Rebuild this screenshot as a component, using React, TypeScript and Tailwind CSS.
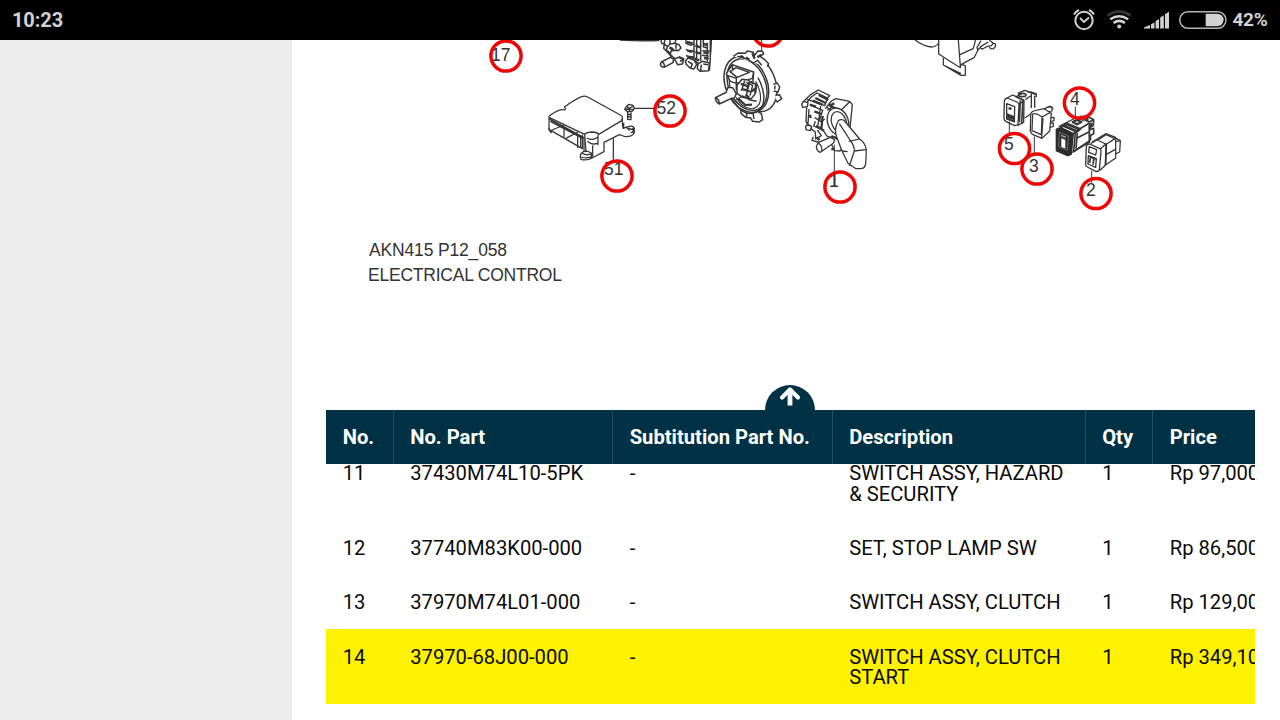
import { clsx } from "clsx";

type Part = {
  no: number;
  part: string;
  sub: string;
  description: string;
  qty: number;
  price: string;
  selected?: boolean;
};

const parts: Part[] = [
  { no: 11, part: "37430M74L10-5PK", sub: "-", description: "SWITCH ASSY, HAZARD & SECURITY", qty: 1, price: "Rp 97,000" },
  { no: 12, part: "37740M83K00-000", sub: "-", description: "SET, STOP LAMP SW", qty: 1, price: "Rp 86,500" },
  { no: 13, part: "37970M74L01-000", sub: "-", description: "SWITCH ASSY, CLUTCH", qty: 1, price: "Rp 129,000" },
  { no: 14, part: "37970-68J00-000", sub: "-", description: "SWITCH ASSY, CLUTCH START", qty: 1, price: "Rp 349,100", selected: true },
];

const columns = ["No.", "No. Part", "Subtitution Part No.", "Description", "Qty", "Price"];

const gridCols = "grid grid-cols-[67.5px_219.5px_219.5px_253px_67.5px_160px] w-[987px]";

// callouts of the exploded view: label position and ring centre
const callouts = [
  { label: "17", x: 491, y: 61, cx: 506, cy: 56 },
  { label: "52", x: 656.5, y: 114, cx: 670, cy: 111 },
  { label: "51", x: 604, y: 175, cx: 617, cy: 176 },
  { label: "1", x: 829, y: 187, cx: 840, cy: 187 },
  { label: "5", x: 1004, y: 150, cx: 1014.5, cy: 148.5 },
  { label: "3", x: 1029, y: 172, cx: 1037, cy: 169 },
  { label: "4", x: 1070, y: 105, cx: 1079.5, cy: 103 },
  { label: "2", x: 1086, y: 196, cx: 1096, cy: 193.5 },
  { label: "", x: 0, y: 0, cx: 768, cy: 31 },
];

function StatusBar() {
  return (
    <header className="flex h-10 shrink-0 items-center bg-black pl-3 pr-3 text-[20px] font-bold text-[#d2d2d2]">
      <span className="w-[60px] tracking-[-0.1px]">10:23</span>
      <svg className="ml-auto" width="160" height="40" viewBox="1070 0 160 40" fill="none" stroke="#d2d2d2">
        {/* alarm */}
        <circle cx="1084" cy="20.5" r="8.7" strokeWidth="2" />
        <path d="M1080 18l4 4 5-4.5" strokeWidth="1.8" />
        <path d="M1074 14.5q1.5-3 5-4.5M1094 14.5q-1.5-3-5-4.5" strokeWidth="2" />
        {/* wifi */}
        <path d="M1107.5 15.5q11.5-8 23 0" stroke="#343434" strokeWidth="2.8" />
        <path d="M1110.2 19.2q9-6 18 0M1113.5 23q5.7-4.3 11.4 0" strokeWidth="2.5" />
        <circle cx="1119.2" cy="26.4" r="2" fill="#d2d2d2" stroke="none" />
        {/* signal */}
        <path
          d="M1144 28.5v-1l6-2.4v3.4zM1151 28.5v-4.2l3.4-1.8v6zM1155.6 28.5v-7.5l3.4-2v9.5zM1160.2 28.5v-11l3.6-2.2v13.2zM1165 28.5v-14.3l4-2.5v16.8z"
          fill="#d2d2d2"
          stroke="none"
        />
        {/* battery */}
        <rect x="1179.7" y="11.7" width="46.3" height="16.6" rx="8.3" strokeWidth="1.5" stroke="#b5b5b5" />
        <path d="M1205.7 13.8h11.7a6.2 6.2 0 0 1 0 12.4h-11.7z" fill="#d2d2d2" stroke="none" />
      </svg>
      <span className="ml-[2.5px] w-[35.5px] text-[19px] tracking-[-0.3px]">42%</span>
    </header>
  );
}

function AirbagController() {
  return (
    <g transform="translate(480 38) scale(.33333)">
      <path d="M206 236q8-8 28-18 12-5 20-2 5-5-1-9 34-24 52-31 8-4 18 1l98 54q10 5 4 17L356 289q-2-6-22-7-16 2-20 7L207 238v36l100 58v-42" />
      <path d="M207 242l105 57v40M211 250l98 52M205 271l8 13 3-8 36-15M252 270v28M256 302l38-20M302 296v32M293 290v40M212 246l90 48" />
      <path d="M314 290l4 52M320 300q18 10 34-3v17q-14 10-32-4M325 312q14 10 23 4M354 290v32M338 322v32" />
      <path d="M426 243l3 28 19-6q13-2 15 7v12q-5 10-18 11-10 2-15-1l-12-4-46 23v28l-30 16q-21 13-39 7-4-6 0-18 6-7 18-7l13 6v15M306 346q13 8 32 1M304 357q18 7 36-4M431 254v18M437 266l12 12M446 270q8 7 13 1v14M452 285l8-5" />
      <path d="M400 301v64M462 211h60" />
      <path d="M440 204l7-5 12 3 4 10-7 8-14 1-8-7 6-10zM441 203l4 8 13-5M434 213l28 2M443 221v23l10 1v-24M443 228l10 3M443 235l10 3M448 211v8" strokeWidth="4" />
    </g>
  );
}

function ComboSwitchLeft() {
  return (
    <g transform="translate(650 40) scale(.33333)" strokeWidth="4.5">
      <path d="M-90 0q70 4 118 1" strokeWidth="5" />
      <path d="M33 0l2 10 8 3-2 12 16 16 8 10M45 0l-3 10 10 10-3 10 12 10M60 0v12l-8 8M60 12l14-2 4-10M74 10l13 4 6 10-8 8-20-3-4 12M78 14v12M66 32l22-2M60 42l14 14 13-4 14 8-4 12-14 2-10-18M87 50l16 7M90 62l12 2" />
      <path d="M34 66l27-14 10 5-2 11-27 14q-9-1-11-9zM34 66q9 1 10 15" fill="#fff" />
      <path d="M108 0v10l14 6 10-5M108 28l12 8 12-4M108 46l14 8 10-3M132 0v60M140 0v54M152 0v62M160 0v20l12 4M157 32l22 2M156 46l20 3M172 8v56M181 0v56l-3 36M184 0l-2 40" />
      <path d="M107 62l7-8 17 5 9 14-8 14-12-3-12-12zM114 64l13 8-5 12M144 72l12-8 22 4-2 24-26 2-8-8zM154 74l-2 18M132 60l14 10M160 72l14 2" fill="#fff" />
      <path d="M110 6l18 4M112 32l16 2M112 50l18 2M136 16l14 6M136 36l14 4M160 12l14 3M160 38l16 1M162 54l14 2M58 22l12 6M134 56l14 5" strokeWidth="7" />
    </g>
  );
}

function ContactCoil() {
  return (
    <g transform="translate(712 40) scale(.33333)" strokeWidth="4.4">
      {/* rear rim */}
      <ellipse cx="127" cy="128" rx="62" ry="91" transform="rotate(-24 127 128)" fill="#fff" />
      <path d="M86 186l1 34 14 12 15 2 6 10 20 2 10-7-4-18z" fill="#fff" />
      <path d="M104 196v34M122 213l4 24" />
      {/* front face */}
      <ellipse cx="103" cy="133" rx="62" ry="88" transform="rotate(-24 103 133)" fill="#fff" />
      <ellipse cx="105" cy="134" rx="55" ry="81" transform="rotate(-24 105 134)" />
      <path d="M57 169q28 55 63 51 40-8 35-56-3-26-17-51" />
      <path d="M72 172q21 37 50 34 30-8 22-49-4-18-13-33M54 144q-4-23-1-40" strokeWidth="3.5" />
      <path d="M64 49l14-10 22 1 6-7 18 4 3 10 11-14 13 1 4 7-10 9 12 8 13 13-4 9M76 49l30 8 18 12 13-8 12 15M184 133l12-4 7 12-5 15-13-3M189 137l-1 11M190 166l12-2 7 12-13 10-5-6" fill="#fff" />
      <path d="M85 47l10 6M102 52l10 7M121 40l7 16M136 52l12-8" strokeWidth="7" />
      {/* cover plate and connector */}
      <path d="M43 101l18-27 64 22-4 19-47 15-19-6zM54 95l18-12 40 14-37 15zM61 74l1 20M125 96l-3 42M46 106l27 9v35" fill="#fff" />
      <path d="M75 136l15-18 18 2 11 9 12 2-2 31-11 14-26-4-17-12zM86 131l21 6-3 29M98 122l-10 31M91 148l28 9M102 127l20 9-8 31M116 124l9 8" fill="#fff" />
      <path d="M87 132l18 6M91 147l21 6M112 126l-5 20M100 165l12 7M119 154l10-8M78 175l22 20 20-1M133 133l-3 26" strokeWidth="6.5" />
      <path d="M73 180l18-12 24 12 19 4" />
      <path d="M10 173l35-17 14 7-1 12-36 17q-11-5-12-19zM10 173q12 2 12 19" fill="#fff" />
      <path d="M43 155l5-13 14 1 11 18-6 13-10 1" fill="#fff" />
      <path d="M149 0v34" strokeWidth="3" />
    </g>
  );
}

function ComboSwitchRight() {
  return (
    <g transform="translate(780 80) scale(.33333)">
      <path
        d="M72 63l21-20 22-13 34 17-10 12M81 67l13-16 17-12 32 15-9 23-53-19M65 73l5-9 14 4-2 12-14 2zM80 81l-2 43 7 14M87 87l-3 43M93 76l35 15-9 29M122 78l-8 58M77 139l7-6 11 7-4 12-13-3zM91 144l15 13 1 20 17-10-12-17M104 113l20 12 10-8M106 124l-5 14 20 9M100 170l-4 11 18 5 3 10M136 86l18-23 14-7 41 8 8 10-8 79M142 91l16-11 26 10 25-25M140 81l14 12M130 152l12 18 24 3"
        strokeWidth="4"
      />
      <path d="M98 62l29 12M106 54l31 15M116 45l29 15M145 73l20 14M108 137l24 15M128 108l-4 39M151 76l12-6M109 172l10 8M154 168l18 8M154 207l17 2M89 74l19 6M90 104l2 10M103 94l20 8" strokeWidth="7" />
      <path d="M114 188l37-16 13 8-4 10-39 27q-11-3-12-17zM114 190q13 2 11 25M155 194l9 18 16 1 8-12" fill="#fff" />
      <ellipse cx="174" cy="125" rx="31" ry="42" transform="rotate(-20 174 125)" fill="#fff" />
      <ellipse cx="177" cy="127" rx="22" ry="33" transform="rotate(-20 177 127)" />
      <path d="M172 128q4-13 19-8l48 57q17 12 20 32l-2 43q-3 14-15 14h-14l-24-16-18-37-16-42q-8-23 2-43z" fill="#fff" />
      <path d="M178 131l32 49q14 18 13 33l-15 45M206 184l33-7M222 213l36-4M186 213l17 2" />
      <path d="M163 194v94M165 278v43" strokeWidth="3" />
    </g>
  );
}

function Bracket() {
  return (
    <g transform="translate(900 36) scale(.33333)">
      <path d="M45 12q23 17 48 21 15 0 23-12M116 12v42l65 41 2-9 40-22 11-22M175 12l6 79M180 56l39-18q6-13 7-26M233 42l-2-8 12-20M130 66v21l53 31h13V89l-10-3M130 87l53 26M242 31q-3 7 6 8 16-10 26-10l6-7-12-10M268 33q4 8 12 5 10-6 5-15l-9-2M234 42l9-11 22-13" />
    </g>
  );
}

function DashSwitches() {
  return (
    <g transform="translate(1000 84) scale(.33333)">
      <g>
        {/* 5 */}
        <path d="M47 39l34-18 27 11v60l-34 28" fill="#fff" stroke="none" />
        <path d="M108 80l-34 22M47 39l34-18" />
        <path d="M13 51q1-7 8-9l30 12q6 3 6 9l-3 59-10 3-27-13q-6-4-5-10zM20 59l24 9-1 46-23-9zM21 42l17-9 34 16-15 13M72 49l-1 66-18 9M53 28l21-9 34 13" fill="#fff" strokeWidth="4" />
        <path d="M76 46l16-10M90 23l19 7v9M94 28v44M104 35v36M81 21l8 5" strokeWidth="4" />
        <path d="M21 90l20 8v13l-20-8zM46 37l23 11-4 69M61 49l-3 66" strokeWidth="5" />
        <path d="M23 96l17 7M30 70v7" strokeWidth="9" />
        <ellipse cx="67" cy="33" rx="11" ry="5" strokeWidth="5" />
      </g>
      <g>
        {/* 3 */}
        <path d="M130 76l18-9 8 4v10l-15 3M145 102l17-2v10l-14 4M148 119l12-2v10l-15 5M139 70l13-3 8 7" fill="#fff" />
        <path d="M92 93q1-10 9-12l31-7 22 14-5 53-23 22-29-12-6-9zM98 90q9-4 28 9l-2 53-28-12zM126 99l25-14M129 102l-4 59" fill="#fff" />
        <path d="M28 112v36M103 157v60M226 68v44" strokeWidth="3" />
      </g>
      <g>
        {/* 4 */}
        <path d="M176 128l50-26 46 14v51l-63 43" fill="#fff" />
        <path d="M240 98l22-1 19 10-1 17-8 4M251 105l16 9 13-6M269 117v20l12-4v16l-15 8" fill="#fff" strokeWidth="5" />
        <path d="M170 136l12-4 37 17-6 61-10 4-33-14z" fill="#2c2c2c" stroke="#2c2c2c" strokeWidth="6" />
        <path d="M178 145l27 11-3 42-26-10z" stroke="#888" strokeWidth="2" />
        <path d="M185 164l10 4v24l-10-4z" fill="#fff" stroke="#fff" strokeWidth="2" />
        <path d="M183 154l15 6" stroke="#aaa" strokeWidth="4" />
        <path d="M182 130l18-11 39 17-17 12M202 120l38 16M191 125l38 17" strokeWidth="8" />
        <path d="M239 135l28-17M220 204l12-8 36-22v-51M232 147l-4 47M230 163l38-20M226 147l-5 55" strokeWidth="5" />
        <path d="M218 114l13-6 13 6-13 7zM262 98v14M274 116v14" strokeWidth="7" />
      </g>
      <g>
        {/* 2 */}
        <path d="M326 163l16-3 19 10-2 34-15 7-20-6M343 174l17-4M343 174v36" fill="#fff" />
        <path d="M276 174l42-25 29 11v62l-38 26" fill="#fff" />
        <path d="M259 187q1-8 10-7l31 14q4 3 3 9l-5 55q-3 6-11 4l-25-13q-6-3-5-10zM268 188l22 9-3 16-21-8zM265 215l24 9-2 26-23-10zM272 178l20-10 25 12-15 14M318 180l-2 64-16 15M294 168l24-16 27 12-25 16M318 212l28-16" fill="#fff" strokeWidth="4" />
        <path d="M272 216l-3 21M282 220l-3 22M270 219l17 7M319 178l-2 64" strokeWidth="5" />
        <path d="M275 260v36" strokeWidth="3" />
      </g>
    </g>
  );
}

function PartsDiagram() {
  return (
    <svg className="block shrink-0" width="988" height="345" viewBox="292 40 988 345">
      <g fill="none" stroke="#363636" strokeWidth="3.8" strokeLinejoin="round">
        <AirbagController />
        <ComboSwitchLeft />
        <ContactCoil />
        <ComboSwitchRight />
        <Bracket />
        <DashSwitches />
      </g>
      <g className="font-['Liberation_Sans',sans-serif]" fill="#333">
        {callouts.map((c) => (
          <g key={`${c.cx}-${c.cy}`}>
            <text x={c.x} y={c.y} fontSize="17.5">
              {c.label}
            </text>
            <circle cx={c.cx} cy={c.cy} r="15.1" fill="none" stroke="#f00505" strokeWidth="3.5" />
          </g>
        ))}
        <text x="369" y="256" fontSize="17.5" textLength="138">
          AKN415 P12_058
        </text>
        <text x="368" y="280.5" fontSize="17.5" textLength="194">
          ELECTRICAL CONTROL
        </text>
      </g>
    </svg>
  );
}

function PartsTable() {
  return (
    <section className="ml-[34px] w-[929px] overflow-hidden">
      <div className={clsx(gridCols, "relative z-10 h-[54px] bg-[#003145] font-bold text-white")}>
        {columns.map((name) => (
          <div key={name} className="flex items-center whitespace-nowrap border-r border-[#264f60] pl-[16.7px]">
            {name}
          </div>
        ))}
      </div>
      <div className="-mt-[18.3px]">
        {parts.map((p) => (
          <div key={p.no} className={clsx(gridCols, "text-[#0a0a0a]", p.selected && "bg-[#fff200]")}>
            {[p.no, p.part, p.sub, p.description, p.qty, p.price].map((value, i) => (
              <div key={i} className="whitespace-nowrap pt-[17.4px] pb-[16.6px] pl-[16.7px] pr-3 nth-4:whitespace-normal">
                {value}
              </div>
            ))}
          </div>
        ))}
      </div>
    </section>
  );
}

export default function App() {
  return (
    <div className="flex h-[720px] w-[1280px] flex-col overflow-hidden bg-white font-[Roboto,sans-serif]">
      <StatusBar />
      <div className="flex min-h-0 flex-1">
        <aside className="w-[292px] shrink-0 bg-[#ebebeb]" />
        <main className="flex min-w-0 flex-1 flex-col overflow-hidden text-[20.2px] leading-[20.4px]">
          <PartsDiagram />
          <button className="ml-[473px] flex h-[25px] w-[50px] shrink-0 justify-center rounded-t-full bg-[#003145]" aria-label="Scroll up">
            <svg width="24" height="25" viewBox="0 0 24 25" fill="none" stroke="#fff" strokeWidth="4.8" strokeLinejoin="round">
              <path d="M4 12.5l8-8 8 8" strokeWidth="4.2" strokeLinecap="round" />
              <path d="M12 6v14.5" />
            </svg>
          </button>
          <PartsTable />
        </main>
      </div>
    </div>
  );
}
